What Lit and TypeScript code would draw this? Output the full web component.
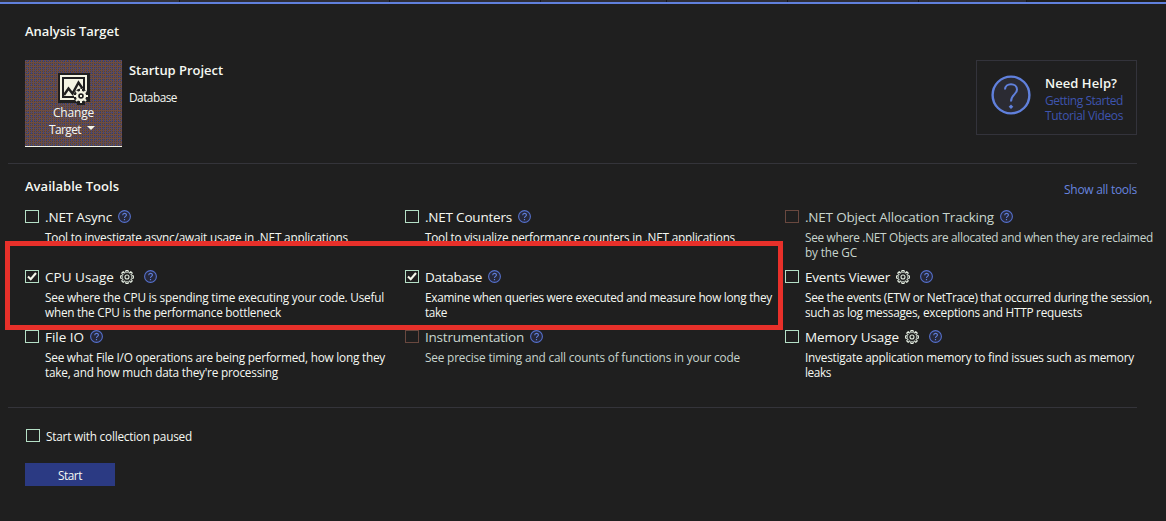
import { LitElement, html, svg, css, nothing } from "lit";
import { customElement, property } from "lit/decorators.js";

/** A single line of text whose tracking is adjusted to occupy a given width. */
@customElement("fit-text")
class FitText extends LitElement {
  @property() text = "";
  @property({ type: Number }) width = 0;
  static styles = css`
    :host { display: block; white-space: pre; }
    .line { display: inline-block; }
  `;
  render() {
    return html`<span class="line">${this.text}</span>`;
  }
  updated() {
    const line = this.renderRoot.querySelector(".line") as HTMLElement;
    line.style.letterSpacing = "0px";
    const natural = line.getBoundingClientRect().width;
    const gap = (this.width - natural) / this.text.length;
    line.style.letterSpacing = gap.toFixed(4) + "px";
  }
}

type Tool = {
  name: string;
  w: number;
  gear?: boolean;
  checked?: boolean;
  off?: boolean;
  lines: [string, number][];
};

const TOOLS: Tool[] = [
  { name: ".NET Async", w: 67, lines: [["Tool to investigate async/await usage in .NET applications", 303]] },
  { name: ".NET Counters", w: 87, lines: [["Tool to visualize performance counters in .NET applications", 310]] },
  { name: ".NET Object Allocation Tracking", w: 189, off: true, lines: [["See where .NET Objects are allocated and when they are reclaimed", 348], ["by the GC", 52]] },
  { name: "CPU Usage", w: 69, gear: true, checked: true, lines: [["See where the CPU is spending time executing your code. Useful", 339], ["when the CPU is the performance bottleneck", 236]] },
  { name: "Database", w: 57, checked: true, lines: [["Examine when queries were executed and measure how long they", 347], ["take", 22]] },
  { name: "Events Viewer", w: 85, gear: true, lines: [["See the events (ETW or NetTrace) that occurred during the session,", 347], ["such as log messages, exceptions and HTTP requests", 277]] },
  { name: "File IO", w: 39, lines: [["See what File I/O operations are being performed, how long they", 340], ["take, and how much data they're processing", 233]] },
  { name: "Instrumentation", w: 99, off: true, lines: [["See precise timing and call counts of functions in your code", 315]] },
  { name: "Memory Usage", w: 94, gear: true, lines: [["Investigate application memory to find issues such as memory", 329], ["leaks", 26]] },
];

const text = (t: string, w: number, cls = "") => html`<fit-text class=${cls} .text=${t} .width=${w}></fit-text>`;

const helpIcon = html`<svg class="help" width="13" height="13" viewBox="0 0 13 13">
  <circle cx="6.5" cy="6.5" r="5.9" fill="#26283a" stroke="#5570cc" stroke-width="1.1" />
  <path d="M4.7 5.2C4.7 2.8 8.4 2.8 8.4 5c0 1.4-1.9 1.5-1.9 3" fill="none" stroke="#5f7fdc" stroke-width="1.1" />
  <rect x="5.9" y="9" width="1.2" height="1.2" fill="#5f7fdc" />
</svg>`;

const gearIcon = html`<svg class="gear" width="14" height="14" viewBox="0 0 14 14">
  ${[0, 45, 90, 135, 180, 225, 270, 315].map(
    (a) => svg`<path d="M5.6 2.4 6 .6h2l.4 1.8" transform="rotate(${a} 7 7)" fill="none" stroke="#e6eee2" stroke-width="1.1" />`,
  )}
  <circle cx="7" cy="7" r="4.6" fill="none" stroke="#aeb8b0" stroke-width=".8" />
  <circle cx="7" cy="7" r="2" fill="none" stroke="#dfe8dc" stroke-width="1.1" />
</svg>`;

const checkbox = (checked = false, off = false) => html`<span class="box ${off ? "off" : ""}">
  ${checked ? html`<svg width="12" height="11" viewBox="0 0 12 11"><path d="M2 5.6 4.7 8.3 10 2" fill="none" stroke="#f4f6ea" stroke-width="2.1" /></svg>` : nothing}
</span>`;

@customElement("app-root")
class AppRoot extends LitElement {
  static styles = css`
    :host {
      display: block; position: relative; width: 1166px; height: 521px; overflow: hidden;
      background: #1f1f1f; color: #f5f8f2;
      font: 11.8px/15px "Open Sans", "Noto Sans", sans-serif;
    }
    .strip {
      display: grid; height: 2px; background: #1f1f1f;
      grid-template-columns: 180px 210px 151px 126px 121px 131px 108px;
    }
    .strip i { background: #2e2e37; border-right: 1px solid #151519; }
    .strip i:first-child { background: #33333c; }
    .accent { height: 2px; background: #6080dc; }
    .heading { font-size: 13px; font-weight: 600; line-height: 18px; }
    .target { height: 159px; padding: 18px 0 0 25px; box-sizing: border-box; }
    .row { display: flex; margin-top: 20px; }
    .change {
      width: 97px; height: 87px; box-sizing: border-box; border-bottom: 1px solid #f4f4e8;
      display: flex; flex-direction: column; align-items: center; padding-top: 13px;
      background-color: #704d41;
      background-image:
        conic-gradient(at 1px 1px, transparent 75%, #3d4688 0),
        conic-gradient(at 1px 1px, transparent 75%, #3d4688 0),
        conic-gradient(at 1px 1px, transparent 75%, #474246 0);
      background-size: 3px 4px, 4px 3px, 2px 2px;
      background-position: 0 0, 2px 1px, 1px 1px;
    }
    .change svg { display: block; }
    .cl { line-height: 17px; font-size: 12px; }
    .c1 { margin-top: -1px; }
    .tline { display: flex; align-items: center; gap: 6px; margin-left: -3px; }
    .tline svg { margin-top: -3px; }
    .info { margin-left: 7px; padding-top: 1px; }
    .info .db { margin-top: 11px; }
    .helpbox {
      margin-left: auto; margin-right: 29px; width: 161px; height: 75px; box-sizing: border-box;
      border: 1px solid #33333b; display: flex; padding: 14px 0 0 14px;
    }
    .helpbox .txt { margin-left: 14px; }
    .helpbox .heading { line-height: 17px; margin-bottom: 1px; }
    .link { color: #3e54ae; font-size: 12px; }
    hr { border: 0; height: 1px; margin: 0 29px 0 8px; background: #34343a; }
    .tools { height: 243px; box-sizing: border-box; padding: 13px 0 0 25px; }
    .bar { display: flex; justify-content: space-between; padding-right: 29px; height: 33px; }
    .all { color: #6784df; font-size: 12px; padding-top: 5px; }
    .grid { display: grid; grid-template-columns: repeat(3, 380px); grid-auto-rows: 60px; }
    .tool { display: flex; gap: 6px; }
    .box { width: 14px; height: 13px; box-sizing: border-box; border: 1px solid #b5dfc6; display: block; flex: none; }
    .box svg { display: block; }
    .box.off { border-color: #69483f; }
    .name { display: flex; align-items: center; height: 13px; font-size: 13.5px; margin-bottom: 7px; }
    .name fit-text { padding-top: 2px; }
    .help { margin-left: 6px; }
    .gear { margin-left: 6px; }
    .gear + .help { margin-left: 10px; }
    .tool.dim { color: #c8d5ce; }
    .foot { padding: 21px 0 0 25px; }
    .pause { display: flex; gap: 6px; align-items: center; margin-left: 1px; height: 13px; }
    .pause fit-text, .start fit-text { padding-top: 2px; }
    .start {
      margin-top: 21px; width: 90px; height: 23px; background: #2b3a83;
      display: flex; align-items: center; justify-content: center;
    }
    .frame {
      position: absolute; left: 5px; top: 241px; width: 778px; height: 89px;
      box-sizing: border-box; border: 5px solid #e8302a;
    }
  `;
  render() {
    return html`
      <div class="strip"><i></i><i></i><i></i><i></i><i></i><i></i><i></i></div>
      <div class="accent"></div>
      <section class="target">
        ${text("Analysis Target", 94, "heading")}
        <div class="row">
          <div class="change">
            <svg width="32" height="32" viewBox="0 0 32 32">
              <path d="M0 0h32v29h-5v3h-8v-2H0z" fill="#1f1f1f" />
              <path d="M3 3h25v23H3z" fill="none" stroke="#f4f4e3" stroke-width="2" />
              <path d="M6 6h19v17H6z" fill="#f4f4e3" />
              <path d="M6 22 10.5 15.5l4 5 6-11 4 6" fill="none" stroke="#1f1f1f" stroke-width="2.4" />
              <circle cx="23" cy="23" r="7.5" fill="#1f1f1f" />
              <circle cx="23" cy="23" r="4" fill="none" stroke="#f4f4e3" stroke-width="2.4" />
              <path d="M23 16v3M23 27v3M16 23h3M27 23h3M18 18l2 2M26 26l2 2M28 18l-2 2M20 26l-2 2" stroke="#f4f4e3" stroke-width="2" />
              <rect x="22" y="22" width="2" height="2" fill="#f4f4e3" />
            </svg>
            ${text("Change", 41, "cl c1")}
            <div class="tline">${text("Target", 32, "cl")}<svg width="8" height="4"><path d="M0 0h8l-4 4z" fill="#f4f4e8" /></svg></div>
          </div>
          <div class="info">
            ${text("Startup Project", 94, "heading")}
            ${text("Database", 48, "db")}
          </div>
          <div class="helpbox">
            <svg width="40" height="40" viewBox="0 0 40 40">
              <circle cx="20" cy="20" r="18.4" fill="#2b2b33" stroke="#6080dc" stroke-width="2.4" />
              <path d="M14 14.5c0-7 12-7 12 0 0 5-6 5-6 12" fill="none" stroke="#6080dc" stroke-width="2" />
              <path d="m20 29.5 2.3 2.3-2.3 2.3-2.3-2.3z" fill="#6080dc" />
            </svg>
            <div class="txt">
              ${text("Need Help?", 72, "heading")}
              ${text("Getting Started", 78, "link")}
              ${text("Tutorial Videos", 78, "link")}
            </div>
          </div>
        </div>
      </section>
      <hr />
      <section class="tools">
        <div class="bar">${text("Available Tools", 94, "heading")}${text("Show all tools", 73, "all")}</div>
        <div class="grid">
          ${TOOLS.map(
            (t) => html`<div class="tool ${t.off ? "dim" : ""}">
              ${checkbox(t.checked, t.off)}
              <div>
                <div class="name">${text(t.name, t.w)}${t.gear ? gearIcon : nothing}${helpIcon}</div>
                ${t.lines.map(([s, w]) => text(s, w))}
              </div>
            </div>`,
          )}
        </div>
      </section>
      <hr />
      <section class="foot">
        <div class="pause">${checkbox()}${text("Start with collection paused", 146)}</div>
        <div class="start">${text("Start", 24)}</div>
      </section>
      <div class="frame"></div>
    `;
  }
}
